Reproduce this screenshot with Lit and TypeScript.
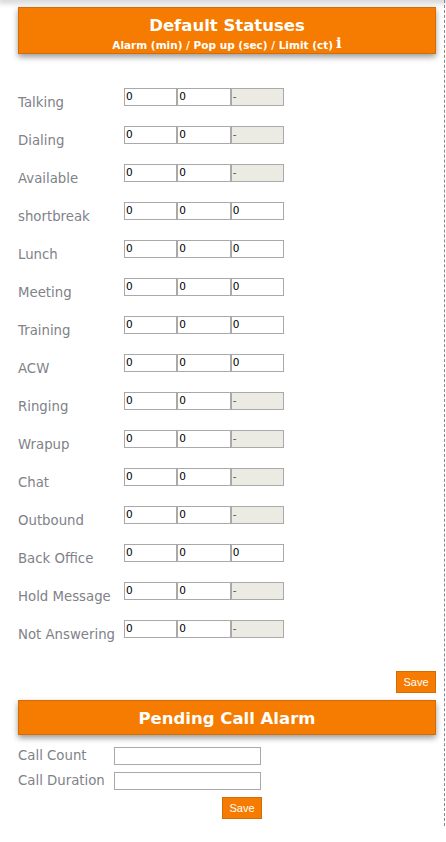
import { LitElement, html, css } from "lit";
import { customElement } from "lit/decorators.js";

const rows: [string, boolean][] = [
  ["Talking", false], ["Dialing", false], ["Available", false], ["shortbreak", true],
  ["Lunch", true], ["Meeting", true], ["Training", true], ["ACW", true],
  ["Ringing", false], ["Wrapup", false], ["Chat", false], ["Outbound", false],
  ["Back Office", true], ["Hold Message", false], ["Not Answering", false],
];

@customElement("app-root")
export class AppRoot extends LitElement {
  static styles = css`
    :host { display: block; width: 446px; height: 842px; overflow: hidden; background: #fff; font-family: "DejaVu Sans", Verdana, sans-serif; }
    .topshadow { height: 0; box-shadow: 0 0 6px 2px rgba(0,0,0,.3); }
    .page { box-sizing: border-box; width: 445px; height: 826px; border-right: 1px dashed #888; padding: 7px 8px 0 18px; }
    .bar { box-sizing: border-box; background: #f57c00; border: 1px solid #d26c06; color: #fff; text-align: center; box-shadow: 0 3px 6px rgba(0,0,0,.4); }
    .bar.main { height: 47px; padding-top: 8px; }
    .bar.sub { height: 35px; padding-top: 8px; margin-top: 7px; }
    h2 { margin: 0; font-size: 16.5px; line-height: 20px; font-weight: 700; }
    .hint { display: flex; justify-content: center; align-items: center; gap: 3px; font-size: 10.5px; line-height: 12px; font-weight: 700; margin-top: 3px; }
    .info { font-family: "DejaVu Serif", serif; font-size: 15px; line-height: 12px; font-weight: 900; position: relative; top: -2px; }
    .rows { display: flex; flex-direction: column; gap: 20px; padding-top: 34px; }
    .row { display: flex; height: 18px; }
    .label { width: 106px; font-size: 13.3px; line-height: 18px; color: #808288; position: relative; top: 6px; white-space: nowrap; }
    .cells { display: flex; }
    input { box-sizing: border-box; height: 18px; margin: 0; border: 1px solid #a9a9a9; padding: 0 1px 2px; outline: 0; font: 10.5px "DejaVu Sans", sans-serif; color: #000; background: #fff; border-radius: 0; }
    .cells input { width: 53.33px; }
    input:disabled { background: #ebebe4; color: #555; -webkit-text-fill-color: #555; }
    .actions { display: flex; justify-content: flex-end; padding-top: 33px; }
    button { box-sizing: border-box; width: 40px; height: 22px; padding: 0; border: 1px solid #d26c06; background: #f57c00; color: #fff; font: 11px "Liberation Sans", Arial, sans-serif; }
    .alarm { display: flex; flex-direction: column; gap: 7px; padding-top: 12px; }
    .line { display: flex; align-items: center; height: 18px; }
    .line span { width: 96px; font-size: 13.3px; color: #808288; white-space: nowrap; padding-bottom: 2px; }
    .line input { width: 147px; }
    .save2 { display: flex; padding: 7px 0 0 204px; }
  `;

  render() {
    return html`
      <div class="topshadow"></div>
      <div class="page">
        <div class="bar main">
          <h2>Default Statuses</h2>
          <div class="hint"><span>Alarm (min) / Pop up (sec) / Limit (ct)</span><span class="info">i</span></div>
        </div>
        <div class="rows">
          ${rows.map(([name, limit]) => html`
            <div class="row">
              <div class="label">${name}</div>
              <div class="cells">
                <input value="0" /><input value="0" />
                ${limit ? html`<input value="0" />` : html`<input value="-" disabled />`}
              </div>
            </div>`)}
        </div>
        <div class="actions"><button>Save</button></div>
        <div class="bar sub"><h2>Pending Call Alarm</h2></div>
        <div class="alarm">
          <div class="line"><span>Call Count</span><input /></div>
          <div class="line"><span>Call Duration</span><input /></div>
        </div>
        <div class="save2"><button>Save</button></div>
      </div>
    `;
  }
}
